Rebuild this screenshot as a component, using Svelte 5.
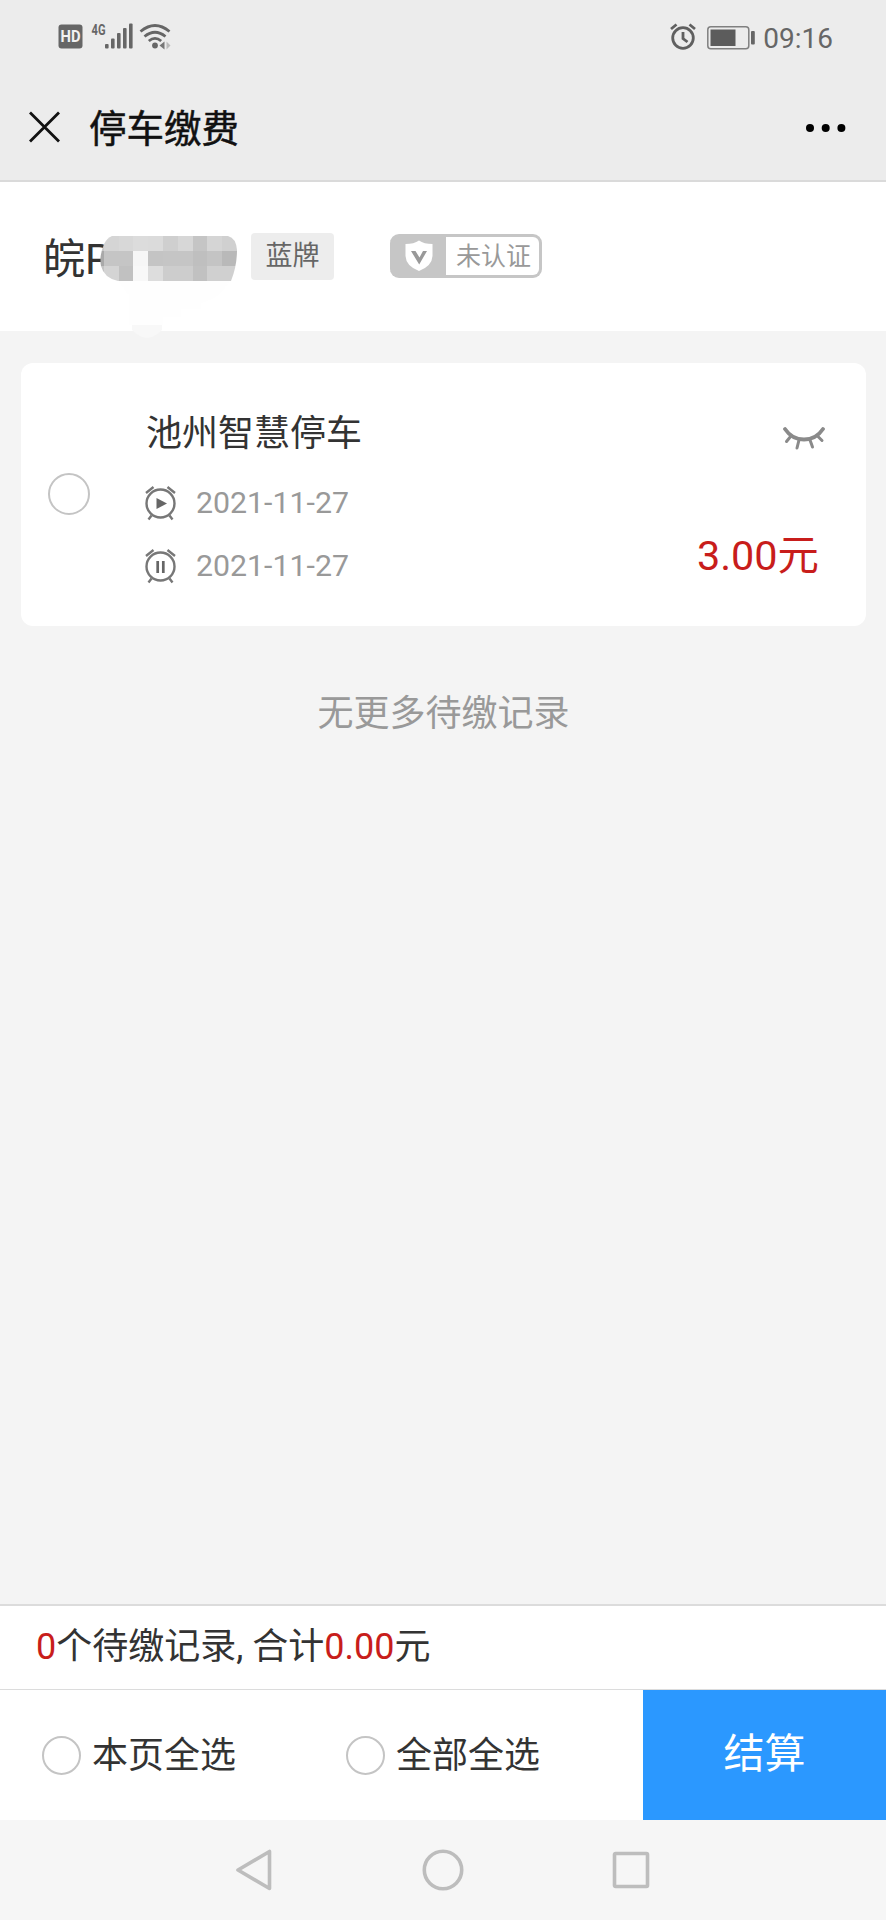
<script>
  let record = {
    name: "池州智慧停车",
    start: "2021-11-27",
    end: "2021-11-27",
    price: "3.00",
    checked: false,
  };

  let options = ["本页全选", "全部全选"];

  // grey levels of the blocks hiding the plate number
  let mosaic = [
    ["#c8c8c8", "#d5d5d5", "#d8d8d8", "#dcdcdc", "#dbdbdb", "#cfcfcf", "#d7d7d7", "#c5c5c5", "#d5d5d5", "#d0d0d0"],
    ["#a9a9a9", "#c5c5c5", "#c5c5c5", "#f6f6f6", "#c4c4c4", "#c5c5c5", "#c5c5c5", "#bfbfbf", "#c4c4c4", "#b9b9b9"],
    ["#c4c4c4", "#d4d4d4", "#c1c1c1", "#f8f8f8", "#dddddd", "#cdcdcd", "#cdcdcd", "#c1c1c1", "#d0d0d0", "#d0d0d0"],
  ];
</script>

<div class="page">
  <div class="status-bar">
    <svg class="status-left" width="124" height="36" viewBox="0 -4 124 36">
      <rect x="0.5" y="1.5" width="24" height="24" rx="3" fill="#666" />
      <text x="12.5" y="19.3" class="hd" textLength="20" lengthAdjust="spacingAndGlyphs">HD</text>
      <text x="33.5" y="11.5" class="net" textLength="14" lengthAdjust="spacingAndGlyphs">4G</text>
      <g fill="#666">
        <rect x="47" y="21" width="3.6" height="4.5" rx="1" />
        <rect x="53" y="15.5" width="3.6" height="10" rx="1" />
        <rect x="59" y="10" width="3.6" height="15.5" rx="1" />
        <rect x="65" y="5" width="3.6" height="20.5" rx="1" />
        <rect x="71" y="0.5" width="3.6" height="25" rx="1" />
      </g>
      <g fill="none" stroke="#666" stroke-width="2.8">
        <path d="M82.5 8.5Q97 -3.5 111.5 8.5" />
        <path d="M86.5 13.5Q97 5 107.5 13.5" />
        <path d="M90.8 18Q97 12.8 103.2 18" />
      </g>
      <circle cx="97" cy="22.5" r="2.9" fill="#666" />
      <path d="M106.5 18.5v8l-5-4z" fill="#777" />
      <path d="M108.5 18.5v8l4-4z" fill="#bbb" />
    </svg>
    <div class="status-right">
      <svg width="26" height="28" viewBox="0 0 26 28">
        <g fill="none" stroke="#606060" stroke-width="2.8">
          <circle cx="13" cy="15" r="10.3" />
          <path d="M13 9v6.5l4.5 3.5" />
          <path d="M1 6l5.5-4.500M25 6l-5.500-4.500" />
        </g>
      </svg>
      <svg class="battery" width="48" height="24" viewBox="0 0 48 24">
        <rect x="0.8" y="0.8" width="41" height="22" rx="3" fill="none" stroke="#808080" stroke-width="1.5" />
        <rect x="3.5" y="3.5" width="25" height="16.5" fill="#5c5c5c" />
        <rect x="44" y="5" width="3.8" height="13.5" rx="1" fill="#666" />
      </svg>
      <span class="clock">09:16</span>
    </div>
  </div>

  <header>
    <svg width="32" height="32" viewBox="0 0 32 32">
      <path d="M1 1.5l29 29M30 1.5l-29 29" stroke="#111" stroke-width="2.8" />
    </svg>
    <h1>停车缴费</h1>
    <svg class="more" width="40" height="10" viewBox="0 0 40 10">
      <circle cx="4" cy="5" r="4" />
      <circle cx="19.7" cy="5" r="4" />
      <circle cx="35.4" cy="5" r="4" />
    </svg>
  </header>

  <section class="plate">
    <div class="number">
      <span>皖P</span>
      <svg class="mosaic" width="137" height="45" viewBox="0 0 137 45">
        <defs>
          <clipPath id="smear">
            <path d="M12 0H128Q136 2 137 14Q137 30 131 45H18Q4 42 1 30Q-1 20 4 8Q7 2 12 0Z" />
          </clipPath>
        </defs>
        <g clip-path="url(#smear)" shape-rendering="crispEdges">
          {#each mosaic as row, y}
            {#each row as fill, x}
              <rect x={x * 14.8 - 11} y={y * 15} width="15" height="15" {fill} />
            {/each}
          {/each}
        </g>
      </svg>
      <svg class="trace" width="110" height="58" viewBox="0 0 110 58">
        <path d="M0 0H110Q100 18 82 22V28H62V36H44V44H10V14Z" fill="#fefefe" />
        <path d="M13 44H43V49Q36 56 28 57Q20 56 13 49Z" fill="#f8f8f8" />
      </svg>
    </div>
    <span class="tag">蓝牌</span>
    <div class="verify">
      <svg width="28" height="32" viewBox="0 0 28 32">
        <path d="M14 .5Q19 4 27.5 4V16Q27 26 14 31Q1 26 .5 16V4Q9 4 14 .5Z" fill="#fff" />
        <path d="M6 11h4.5l4 6.5 3.5-6.5H22L14.2 24.5Z" fill="#999" />
      </svg>
      <span>未认证</span>
    </div>
  </section>

  <main>
    <article class="card">
      <span class="radio" class:on={record.checked}></span>
      <div class="info">
        <h2>{record.name}</h2>
        <div class="time">
          <svg width="32" height="36" viewBox="0 0 32 36">
            <g fill="none" stroke="#777" stroke-width="2.4">
              <circle cx="15.5" cy="18.5" r="14" />
              <path d="M1 8l7.5-6M30 8l-7.5-6M6.5 30.5l-3 4M24.5 30.5l3 4" />
            </g>
            <path d="M11.5 13v11l10.5-5.5z" fill="#666" />
          </svg>
          <span>{record.start}</span>
        </div>
        <div class="time">
          <svg width="32" height="36" viewBox="0 0 32 36">
            <g fill="none" stroke="#777" stroke-width="2.4">
              <circle cx="15.5" cy="18.5" r="14" />
              <path d="M1 8l7.5-6M30 8l-7.5-6M6.5 30.5l-3 4M24.5 30.5l3 4" />
            </g>
            <path d="M12.7 13v12M18.3 13v12" stroke="#666" stroke-width="2.7" />
          </svg>
          <span>{record.end}</span>
        </div>
      </div>
      <div class="side">
        <svg width="42" height="24" viewBox="0 0 42 24">
          <g fill="none" stroke="#8a8a8a" stroke-linecap="round">
            <path d="M2 3Q9 13.5 21 13.5T40 3" stroke-width="3.8" />
            <path d="M8 10l-4.5 5.5M16 14l-2 8M27 14l2.5 7M34.5 10l4.5 4.5" stroke-width="3" />
          </g>
        </svg>
        <span class="price">{record.price}元</span>
      </div>
    </article>
    <p class="empty">无更多待缴记录</p>
  </main>

  <div class="summary">
    <em>0</em>个待缴记录, 合计<em>0.00</em>元
  </div>

  <div class="actions">
    {#each options as option}
      <div class="option">
        <span class="radio small"></span>
        <span class="label">{option}</span>
      </div>
    {/each}
    <button>结算</button>
  </div>

  <nav>
    <svg width="42" height="42" viewBox="0 0 42 42">
      <path d="M35.5 2.5V39.5L4 21Z" />
    </svg>
    <svg width="42" height="42" viewBox="0 0 42 42">
      <circle cx="21" cy="21" r="18.7" />
    </svg>
    <svg width="42" height="42" viewBox="0 0 42 42">
      <rect x="4.5" y="4.5" width="33" height="33" rx="1" />
    </svg>
  </nav>
</div>

<style>
  :global(body) {
    background: #f4f4f4;
  }

  .page {
    display: flex;
    flex-direction: column;
    height: 1920px;
    font-family: Roboto, "Noto Sans CJK SC", sans-serif;
    color: #333;
    background: #f4f4f4;
  }

  .page svg {
    display: block;
    flex: none;
  }

  /* status bar */
  .status-bar {
    display: flex;
    justify-content: space-between;
    align-items: center;
    height: 74px;
    box-sizing: border-box;
    padding: 0 53px 0 58px;
    background: #ececec;
  }

  .hd {
    font-size: 16px;
    font-weight: bold;
    text-anchor: middle;
    fill: #f2f2f2;
  }

  .net {
    font-size: 15px;
    font-weight: bold;
    fill: #666;
  }

  .status-right {
    display: flex;
    align-items: center;
  }

  .battery {
    margin: 1px 8px 0 11px;
  }

  .clock {
    font-size: 28px;
    line-height: 30px;
    color: #666;
    margin-top: 3px;
  }

  /* title bar */
  header {
    display: flex;
    align-items: center;
    height: 108px;
    box-sizing: border-box;
    padding: 0 40px 0 29px;
    background: #ececec;
    border-bottom: 2px solid #dadada;
  }

  h1 {
    flex: 1;
    margin: 4px 0 0 28px;
    font-size: 37.5px;
    line-height: 50px;
    font-weight: 400;
    -webkit-text-stroke: 0.5px #111;
    color: #111;
  }

  .more {
    margin-top: 1px;
  }

  /* plate */
  .plate {
    display: flex;
    align-items: flex-start;
    height: 149px;
    box-sizing: border-box;
    padding: 51px 43px 0;
    background: #fff;
  }

  .number {
    position: relative;
    width: 208px;
    height: 50px;
    font-size: 42px;
    line-height: 53px;
  }

  .mosaic {
    position: absolute;
    left: 57px;
    top: 3px;
  }

  .trace {
    position: absolute;
    left: 76px;
    top: 48px;
    height: 58px;
  }

  .tag {
    width: 83px;
    height: 47px;
    border-radius: 4px;
    font-size: 27px;
    line-height: 47px;
    text-align: center;
    color: #666;
    background: #ededed;
  }

  .verify {
    display: flex;
    align-items: center;
    width: 152px;
    height: 44px;
    box-sizing: border-box;
    margin: 1px 0 0 56px;
    padding-left: 15px;
    border: 3px solid #c6c6c6;
    border-left-width: 0;
    border-radius: 9px;
    background: linear-gradient(to right, #c6c6c6 56px, #fff 56px);
  }

  .verify span {
    margin: 1px 0 0 23px;
    font-size: 25px;
    line-height: 38px;
    color: #999;
  }

  /* record */
  main {
    flex: 1;
    padding: 32px 20px 0 21px;
  }

  .card {
    display: flex;
    height: 263px;
    box-sizing: border-box;
    padding: 0 41px 0 27px;
    border-radius: 12px;
    background: #fff;
  }

  .radio {
    flex: none;
    width: 42px;
    height: 42px;
    box-sizing: border-box;
    margin-top: 110px;
    border: 2px solid #c4c4c4;
    border-radius: 50%;
  }

  .radio.on {
    background: #2b98ff;
  }

  .radio.small {
    width: 39px;
    height: 39px;
    margin: 0;
  }

  .info {
    flex: 1;
    padding: 44px 0 0 55px;
  }

  h2 {
    margin: 0 0 9px 1px;
    font-size: 36px;
    line-height: 54px;
    font-weight: normal;
  }

  .time {
    display: flex;
    align-items: center;
    height: 63px;
    font-size: 30.3px;
    color: #999;
  }

  .time svg {
    margin-top: 2px;
  }

  .time span {
    margin: 1px 0 0 19px;
  }

  .side {
    display: flex;
    flex-direction: column;
    align-items: flex-end;
    padding-top: 63px;
  }

  .price {
    margin: 76px 6px 0 0;
    font-size: 41.4px;
    line-height: 60px;
    color: #c81d1b;
  }

  .empty {
    margin: 61px 0 0;
    font-size: 36px;
    line-height: 54px;
    text-align: center;
    color: #999;
  }

  /* footer */
  .summary {
    height: 86px;
    box-sizing: border-box;
    padding-left: 36px;
    border-top: 2px solid #dcdcdc;
    border-bottom: 1px solid #dcdcdc;
    font-size: 36px;
    line-height: 83px;
    background: #fff;
  }

  .summary em {
    font-style: normal;
    color: #c81d1b;
  }

  .actions {
    display: flex;
    align-items: center;
    height: 130px;
    padding-left: 42px;
    background: #fff;
  }

  .option {
    display: flex;
    align-items: center;
    width: 304px;
    height: 60px;
    font-size: 36px;
    line-height: 54px;
  }

  .label {
    margin: 2px 0 0 11px;
  }

  .option:nth-child(2) {
    flex: 1;
  }

  button {
    width: 243px;
    height: 130px;
    padding: 0 0 11px;
    border: 0;
    font: inherit;
    font-size: 41px;
    color: #fff;
    background: #2b98ff;
  }

  nav {
    display: flex;
    justify-content: center;
    align-items: center;
    gap: 146px;
    height: 100px;
    background: #f6f6f6;
  }

  nav svg {
    fill: none;
    stroke: #bdbdbd;
    stroke-width: 3.6;
    stroke-linejoin: round;
  }
</style>
